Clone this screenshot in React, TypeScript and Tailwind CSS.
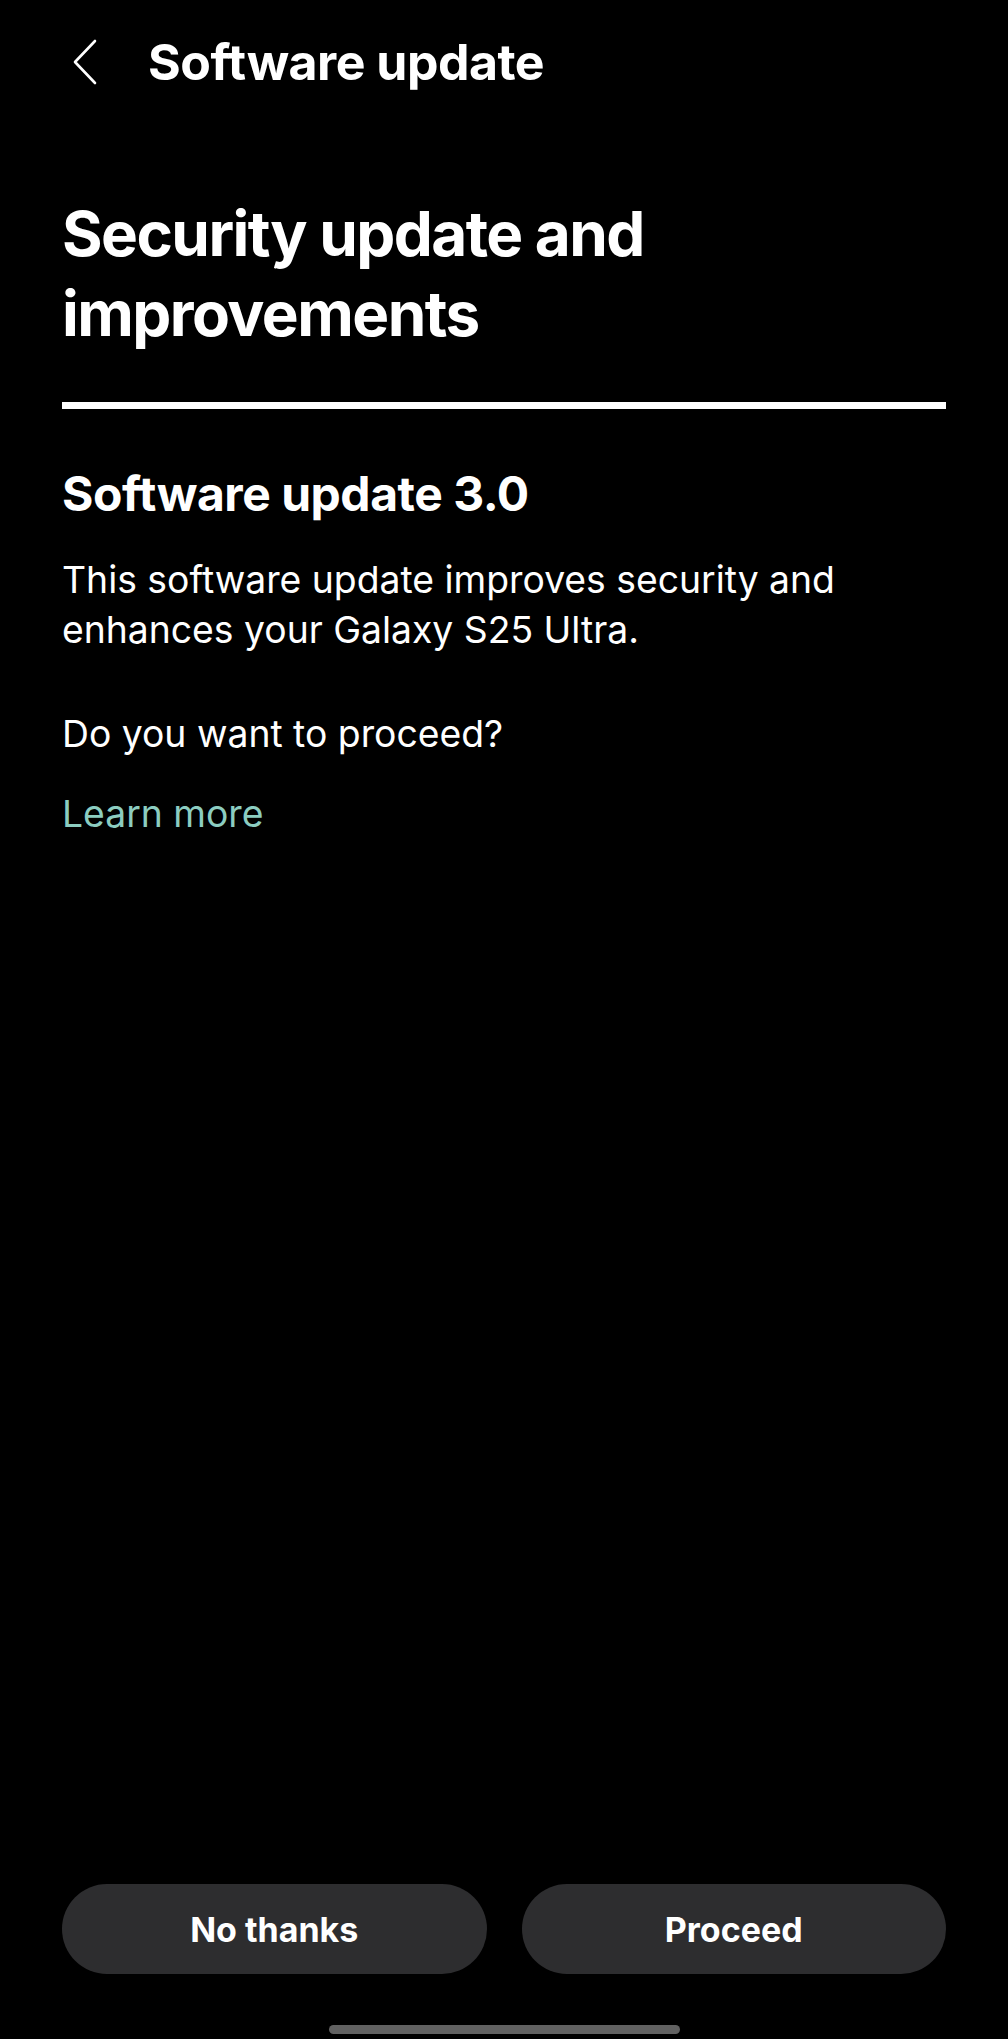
export default function App() {
  return (
    <div
      className="w-[1008px] h-[2039px] bg-black text-white flex flex-col"
      style={{ fontFamily: 'Inter, "Noto Sans", sans-serif' }}
    >
      {/* top bar */}
      <div className="h-[124px] flex items-center pl-[62px]">
        <svg width="30" height="48" viewBox="0 0 30 48" className="ml-[8px]" fill="none">
          <path d="M25 3 L5 24 L25 45" stroke="white" strokeWidth="2.6" strokeLinecap="round" strokeLinejoin="round" />
        </svg>
        <h1 className="ml-[48px] text-[50px] font-bold tracking-[-0.01em] leading-none">Software update</h1>
      </div>

      <div className="px-[62px] flex flex-col">
        <h2 className="mt-[70px] text-[62px] font-bold leading-[80px] tracking-[-0.025em]">
          Security update and
          <br />
          improvements
        </h2>

        <div className="mt-[48px] h-[7px] bg-white" />

        <h3 className="mt-[55px] text-[48px] font-bold leading-[60px] tracking-[-0.01em]">Software update 3.0</h3>

        <p className="mt-[31px] text-[37.3px] leading-[50px]">
          This software update improves security and
          <br />
          enhances your Galaxy S25 Ultra.
        </p>

        <p className="mt-[54px] text-[37.3px] leading-[50px]">Do you want to proceed?</p>

        <a className="mt-[30px] text-[37.3px] leading-[50px] text-[#8ccdc0]">Learn more</a>
      </div>

      <div className="flex-1" />

      {/* actions */}
      <div className="px-[62px] flex gap-[35px]">
        <button className="flex-1 h-[90px] rounded-full bg-[#2d2d2f] text-[34px] font-bold text-white">No thanks</button>
        <button className="flex-1 h-[90px] rounded-full bg-[#2d2d2f] text-[34px] font-bold text-white">Proceed</button>
      </div>

      <div className="h-[65px] flex items-end justify-center pb-[5px]">
        <div className="w-[351px] h-[9px] rounded-full bg-[#616161]" />
      </div>
    </div>
  );
}
